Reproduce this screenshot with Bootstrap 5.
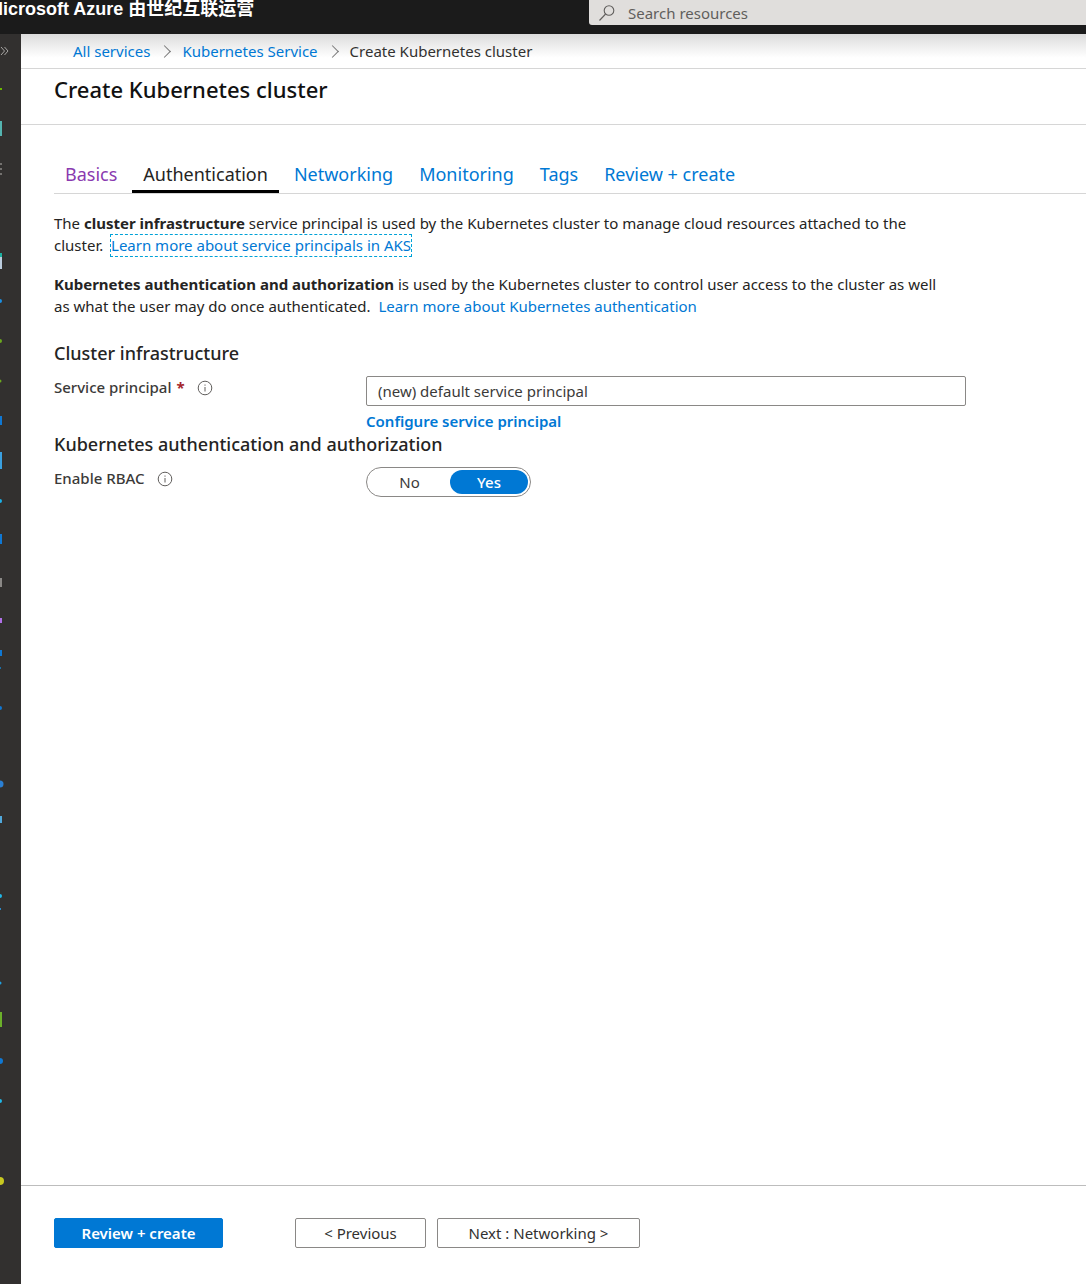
<!DOCTYPE html>
<html lang="en">

<head>
  <meta charset="UTF-8">
  <meta name="viewport" content="width=device-width, initial-scale=1.0">
  <title>Create Kubernetes cluster</title>
  <link href="https://cdn.jsdelivr.net/npm/bootstrap@5.3.2/dist/css/bootstrap.min.css" rel="stylesheet">
  <script src="https://cdn.jsdelivr.net/npm/bootstrap@5.3.2/dist/js/bootstrap.bundle.min.js"></script>
  <style>
    html, body { height: 1284px; overflow: hidden; }
    body { font-family: "Noto Sans", "Noto Sans CJK SC", sans-serif; font-size: 15px; line-height: 22px; color: #252423; }
    a { color: #0078d4; text-decoration: none; }

    .top-bar { height: 34px; background: #1b1b1b; }
    .brand { margin-left: -12px; margin-top: -3px; color: #fff; font-size: 18px; font-weight: 600; line-height: 24px; white-space: nowrap; font-family: "Liberation Sans", "Noto Sans CJK SC", sans-serif; }
    .search-box { width: 497px; height: 25px; background: #e0dedc; border-bottom-left-radius: 3px; padding-left: 9px; gap: 12px; color: #605e5c; line-height: 20px; }

    .side-rail { width: 21px; background: #32302f; }
    .rail-chevrons { color: #a8a6a4; font-size: 13px; line-height: 1; }

    .crumbs { height: 35px; padding-left: 52px; background: linear-gradient(#dcdcdc, #fff 70%); border-bottom: 1px solid #d6d6d6; }
    .crumbs .breadcrumb { --bs-breadcrumb-margin-bottom: 0; --bs-breadcrumb-item-padding-x: 10px; font-size: 15px; }
    .crumbs .breadcrumb-item { display: flex; align-items: center; color: #323130; }
    .crumbs .breadcrumb-item + .breadcrumb-item::before { content: ""; width: 9px; height: 9px; padding: 0; margin: 0 13px 0 0; border-top: 1px solid #777; border-right: 1px solid #777; transform: rotate(45deg); }

    .blade-head { height: 56px; padding: 5px 0 0 33px; border-bottom: 1px solid #d6d6d6; }
    .blade-head h1 { font-size: 22px; line-height: 30px; font-weight: 500; color: #111; margin: 0; font-family: "Noto Sans", sans-serif; }

    .tab-strip { margin: 35px 0 0 33px; height: 34px; border-bottom: 1px solid #d6d6d6; gap: 4px; }
    .tab-strip .nav-link { padding: 0 11px; height: 33px; line-height: 29px; font-size: 18px; color: #0078d4; }
    .tab-strip .nav-link.visited { color: #8a3ab0; }
    .tab-strip .nav-link.active { color: #252423; border-bottom: 3px solid #000; }

    .tab-body { padding: 18px 0 0 33px; }
    .tab-body p { width: 900px; margin: 0 0 17px; }
    .focus-link { outline: 1px dashed #00a2d8; outline-offset: 0; padding: 0 0 1px; }
    .section-title { font-size: 18px; line-height: 24px; font-weight: 500; margin: 0 0 11px; }
    .field-label { width: 312px; color: #3b3a39; font-weight: 500; gap: 12px; }
    .req { color: #a4262c; font-weight: 700; margin-left: 1px; }
    .info-icon { width: 16px; height: 16px; color: #605e5c; flex: none; }
    .name-box { width: 600px; height: 30px; padding: 0 11px; border: 1px solid #8a8886; border-radius: 2px; font-size: 15px; color: #3b3a39; }
    .strong-link { font-weight: 600; }

    .rbac-toggle { width: 165px; height: 30px; padding: 2px; border: 1px solid #8a8886; border-radius: 15px; }
    .rbac-toggle span { height: 24px; line-height: 24px; text-align: center; border-radius: 12px; color: #3b3a39; }
    .rbac-toggle .opt-off { width: 81px; }
    .rbac-toggle .opt-on { width: 78px; background: #0078d4; color: #fff; font-weight: 500; }

    .action-bar { height: 99px; padding: 32px 0 0 33px; border-top: 1px solid #bdbdbd; }
    .action-bar .btn { height: 30px; padding: 0; font-size: 15px; line-height: 28px; border-radius: 2px; }
    .btn-review { width: 169px; margin-right: 72px; background: #0078d4; border: 1px solid #0078d4; color: #fff; font-weight: 600; }
    .btn-plain { border: 1px solid #8a8886; background: #fff; color: #323130; }
    .btn-prev { width: 131px; margin-right: 11px; }
    .btn-next { width: 203px; }
  </style>
</head>

<body class="d-flex flex-column">
  <header class="top-bar d-flex justify-content-between flex-shrink-0 overflow-hidden">
    <div class="brand">Microsoft Azure 由世纪互联运营</div>
    <div class="search-box d-flex align-items-center">
      <svg width="18" height="18" viewBox="0 0 18 18" fill="none" stroke="#605e5c" stroke-width="1.1">
        <circle cx="11" cy="6.5" r="4.8" />
        <path d="M7.6 10 1.5 16.5" />
      </svg>
      <span>Search resources</span>
    </div>
  </header>

  <div class="d-flex flex-grow-1">
    <aside class="side-rail flex-shrink-0">
      <!-- icons of the collapsed menu, only their right edge shows -->
      <svg width="21" height="1250" viewBox="0 34 21 1250" class="d-block">
        <path d="M1 47l3.5 4-3.5 4M4.500 47l3.500 4-3.500 4" fill="none" stroke="#a8a6a4" />
        <rect x="0" y="88" width="2" height="2" fill="#6bb700" />
        <rect x="0" y="121" width="2" height="15" fill="#54b4b0" />
        <path d="M0 164h2M0 169h2M0 174h2" stroke="#8a8886" stroke-width="1.500" />
        <rect x="0" y="253" width="2" height="16" fill="#bcd" />
        <rect x="0" y="253" width="2" height="4" fill="#1bb0a0" />
        <circle cx="0" cy="301" r="2" fill="#1a8fe3" />
        <circle cx="0" cy="341" r="2" fill="#6ba81e" />
        <circle cx="0" cy="381" r="1.500" fill="#6ba81e" />
        <rect x="0" y="416" width="2" height="9" fill="#0f78d4" />
        <rect x="0" y="452" width="2" height="17" fill="#3aa0e0" />
        <circle cx="0" cy="501" r="2" fill="#1ab0e8" />
        <rect x="0" y="534" width="2" height="10" fill="#0f78d4" />
        <rect x="0" y="578" width="2" height="9" fill="#8a8886" />
        <rect x="0" y="618" width="2" height="5" fill="#b070e8" />
        <rect x="0" y="650" width="2" height="6" fill="#0f78d4" />
        <rect x="0" y="667" width="1" height="2" fill="#1a6fa8" />
        <circle cx="0" cy="708" r="2" fill="#0f78d4" />
        <circle cx="0" cy="784" r="3.500" fill="#2a7fd4" />
        <rect x="0" y="816" width="2" height="7" fill="#50a8dc" />
        <circle cx="0" cy="896" r="2" fill="#20b8e8" />
        <rect x="0" y="908" width="1" height="2" fill="#2a88c8" />
        <circle cx="0" cy="983" r="1.500" fill="#20a0e0" />
        <rect x="0" y="1012" width="2" height="15" fill="#6bb02a" />
        <circle cx="0" cy="1061" r="3" fill="#0f78d4" />
        <circle cx="0" cy="1101" r="2" fill="#20b8e8" />
        <circle cx="0" cy="1181" r="4" fill="#c8c820" />
      </svg>
    </aside>

    <main class="flex-grow-1 d-flex flex-column">
      <nav class="crumbs d-flex align-items-center flex-shrink-0">
        <ol class="breadcrumb">
          <li class="breadcrumb-item"><a href="#">All services</a></li>
          <li class="breadcrumb-item"><a href="#">Kubernetes Service</a></li>
          <li class="breadcrumb-item">Create Kubernetes cluster</li>
        </ol>
      </nav>

      <div class="blade-head flex-shrink-0">
        <h1>Create Kubernetes cluster</h1>
      </div>

      <ul class="nav tab-strip flex-shrink-0">
        <li class="nav-item"><a class="nav-link visited" href="#">Basics</a></li>
        <li class="nav-item"><a class="nav-link active" href="#">Authentication</a></li>
        <li class="nav-item"><a class="nav-link" href="#">Networking</a></li>
        <li class="nav-item"><a class="nav-link" href="#">Monitoring</a></li>
        <li class="nav-item"><a class="nav-link" href="#">Tags</a></li>
        <li class="nav-item"><a class="nav-link" href="#">Review + create</a></li>
      </ul>

      <div class="tab-body flex-grow-1">
        <p>The <b>cluster infrastructure</b> service principal is used by the Kubernetes cluster to manage cloud resources attached to the cluster.&nbsp; <a class="focus-link" href="#">Learn more about service principals in AKS</a></p>
        <p><b>Kubernetes authentication and authorization</b> is used by the Kubernetes cluster to control user access to the cluster as well as what the user may do once authenticated.&nbsp; <a href="#">Learn more about Kubernetes authentication</a></p>

        <h2 class="section-title mt-4">Cluster infrastructure</h2>
        <div class="d-flex">
          <div class="field-label d-flex align-items-start">
            <span>Service principal <span class="req">*</span></span>
            <svg class="info-icon mt-1" viewBox="0 0 16 16" fill="none" stroke="currentColor"><circle cx="8" cy="8" r="6.800" /><path d="M8 7v4.500M8 4.500v1.200" /></svg>
          </div>
          <div>
            <input class="name-box d-block" type="text" value="(new) default service principal">
            <a class="strong-link d-block mt-1" href="#">Configure service principal</a>
          </div>
        </div>

        <h2 class="section-title">Kubernetes authentication and authorization</h2>
        <div class="d-flex">
          <div class="field-label d-flex align-items-start">
            <span>Enable RBAC</span>
            <svg class="info-icon mt-1" viewBox="0 0 16 16" fill="none" stroke="currentColor"><circle cx="8" cy="8" r="6.800" /><path d="M8 7v4.500M8 4.500v1.200" /></svg>
          </div>
          <div class="rbac-toggle d-flex">
            <span class="opt-off">No</span>
            <span class="opt-on">Yes</span>
          </div>
        </div>
      </div>

      <div class="action-bar d-flex align-items-start flex-shrink-0">
        <button type="button" class="btn btn-review">Review + create</button>
        <button type="button" class="btn btn-plain btn-prev">&lt; Previous</button>
        <button type="button" class="btn btn-plain btn-next">Next : Networking &gt;</button>
      </div>
    </main>
  </div>
</body>

</html>
